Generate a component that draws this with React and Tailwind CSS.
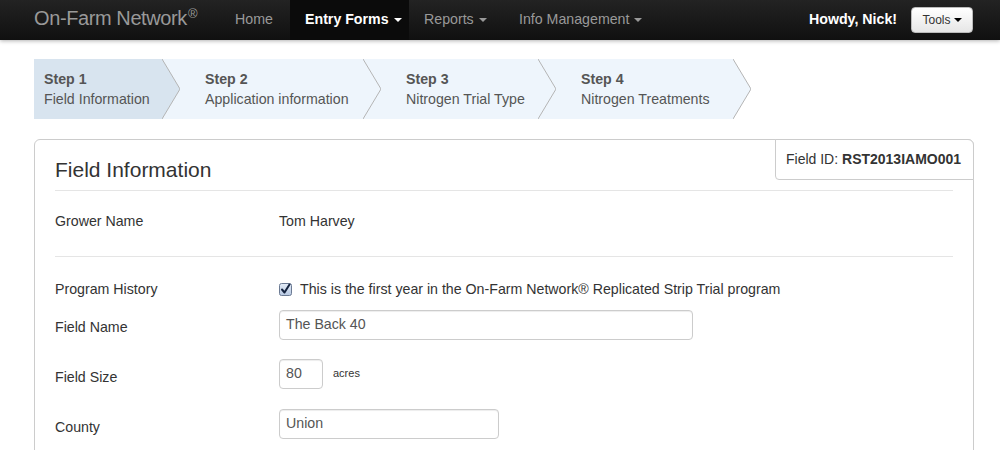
import React from "react";

const font = { fontFamily: '"Liberation Sans", Arial, Helvetica, sans-serif' };

function Caret({ color = "border-t-[#999]" }) {
  return (
    <span
      className={`inline-block w-0 h-0 border-x-[4px] border-x-transparent border-t-[4px] ${color} ml-[5px] align-middle`}
    />
  );
}

function Arrow({ fill, next }) {
  return (
    <svg width="18" height="60" viewBox="0 0 18 60" className="block shrink-0">
      <rect x="0" y="0" width="18" height="60" fill={next} />
      <polygon points="0,0 18,30 0,60" fill={fill} />
      <polyline points="0,0 18,30 0,60" fill="none" stroke="#b5b5b5" strokeWidth="1" />
    </svg>
  );
}

function Step({ n, label, w, pl, bg, next }) {
  return (
    <div className="flex">
      <div className={`h-[60px] flex flex-col justify-center ${w} ${pl}`} style={{ background: bg }}>
        <div className="text-[14.2px] leading-[20px] font-bold text-[#555]">Step {n}</div>
        <div className="text-[14.2px] leading-[20px] text-[#555]">{label}</div>
      </div>
      <Arrow fill={bg} next={next} />
    </div>
  );
}

function Checkbox() {
  return (
    <svg width="13" height="13" viewBox="0 0 13 13" className="block">
      <defs>
        <linearGradient id="cb" x1="0" y1="0" x2="0" y2="1">
          <stop offset="0" stopColor="#e4ecf7" />
          <stop offset="1" stopColor="#b7c8e2" />
        </linearGradient>
      </defs>
      <rect x="0.5" y="0.5" width="12" height="12" rx="2" fill="url(#cb)" stroke="#6b7a93" />
      <path d="M3 6.5 L5.5 9.5 L10.5 1.5" fill="none" stroke="#15233f" strokeWidth="2" strokeLinecap="round" strokeLinejoin="round" />
    </svg>
  );
}

export default function App() {
  return (
    <div className="w-[1000px] h-[450px] overflow-hidden bg-white text-[#333]" style={font}>
      {/* Navbar */}
      <div className="h-[40px] bg-linear-to-b from-[#232323] to-[#101010] shadow-[0_1px_4px_rgba(0,0,0,0.3)]">
        <div className="ml-[34px] w-[940px] h-full flex items-center">
          <div className="w-[186px] text-[20px] tracking-[-0.4px] text-[#999] leading-[40px] -mt-[4px]">
            On-Farm Network<sup className="text-[13px] tracking-normal ml-[1px] -top-[0.55em]">®</sup>
          </div>
          <div className="flex h-full text-[14.2px]">
            <div className="w-[70px] pl-[15px] h-full flex items-center text-[#999]">Home</div>
            <div className="w-[119px] pl-[15px] h-full flex items-center bg-[#0b0b0b] text-white font-bold">
              Entry Forms
              <Caret color="border-t-white" />
            </div>
            <div className="w-[95px] pl-[15px] h-full flex items-center text-[#999]">
              Reports
              <Caret />
            </div>
            <div className="pl-[15px] h-full flex items-center text-[#999]">
              Info Management
              <Caret />
            </div>
          </div>
          <div className="ml-auto flex items-center">
            <div className="text-white font-bold text-[14.2px] mr-[14px]">Howdy, Nick!</div>
            <div className="h-[26px] w-[62px] rounded-[4px] bg-linear-to-b from-white to-[#e6e6e6] border border-[#bbb] flex items-center justify-center text-[12px] text-[#333] mr-[1px]">
              Tools
              <span className="inline-block w-0 h-0 border-x-[4px] border-x-transparent border-t-[4px] border-t-black ml-[3px]" />
            </div>
          </div>
        </div>
      </div>

      <div className="ml-[34px] w-[940px]">
        {/* Steps */}
        <div className="mt-[19px] flex">
          <Step n="1" label="Field Information" w="w-[128px]" pl="pl-[10px]" bg="#d8e4ef" next="#eef5fc" />
          <Step n="2" label="Application information" w="w-[183px]" pl="pl-[25px]" bg="#eef5fc" next="#eef5fc" />
          <Step n="3" label="Nitrogen Trial Type" w="w-[157px]" pl="pl-[25px]" bg="#eef5fc" next="#eef5fc" />
          <Step n="4" label="Nitrogen Treatments" w="w-[177px]" pl="pl-[25px]" bg="#eef5fc" next="#ffffff" />
        </div>

        {/* Card */}
        <div className="mt-[20px] relative border border-[#cccccc] rounded-[6px] h-[330px] px-[20px] pt-[16px]">
          <div className="absolute -top-[1px] -right-[1px] w-[199px] h-[41px] border border-[#cccccc] rounded-bl-[4px] rounded-tr-[6px] bg-white flex items-center pl-[10px] text-[14px] text-[#333]">
            Field ID:&nbsp;<span className="font-bold">RST2013IAMO001</span>
          </div>

          <div className="h-[35px] leading-[28px] text-[21px] text-[#333] border-b border-[#e5e5e5]">
            Field Information
          </div>

          <div className="h-[66px] pt-[20px] border-b border-[#e5e5e5] flex text-[14.2px] leading-[20px]">
            <div className="w-[224px]">Grower Name</div>
            <div>Tom Harvey</div>
          </div>

          <div className="mt-[22px] flex text-[14.2px] leading-[20px]">
            <div className="w-[224px]">Program History</div>
            <div className="flex items-center">
              <Checkbox />
              <span className="ml-[8px]">This is the first year in the On-Farm Network® Replicated Strip Trial program</span>
            </div>
          </div>

          <div className="mt-[11px] flex text-[14.2px]">
            <div className="w-[224px] pt-[7px] leading-[20px]">Field Name</div>
            <div className="w-[414px] h-[30px] border border-[#cccccc] rounded-[4px] px-[6px] flex items-center text-[#555] shadow-[inset_0_1px_1px_rgba(0,0,0,0.075)]">
              The Back 40
            </div>
          </div>

          <div className="mt-[19px] flex text-[14.2px]">
            <div className="w-[224px] pt-[8px] leading-[20px]">Field Size</div>
            <div className="flex items-center">
              <div className="w-[44px] h-[30px] border border-[#cccccc] rounded-[4px] px-[6px] flex items-center text-[#555] shadow-[inset_0_1px_1px_rgba(0,0,0,0.075)]">
                80
              </div>
              <span className="ml-[10px] text-[11px] -mt-[1px]">acres</span>
            </div>
          </div>

          <div className="mt-[20px] flex text-[14.2px]">
            <div className="w-[224px] pt-[8px] leading-[20px]">County</div>
            <div className="w-[220px] h-[30px] border border-[#cccccc] rounded-[4px] px-[6px] flex items-center text-[#555] shadow-[inset_0_1px_1px_rgba(0,0,0,0.075)]">
              Union
            </div>
          </div>
        </div>
      </div>
    </div>
  );
}
